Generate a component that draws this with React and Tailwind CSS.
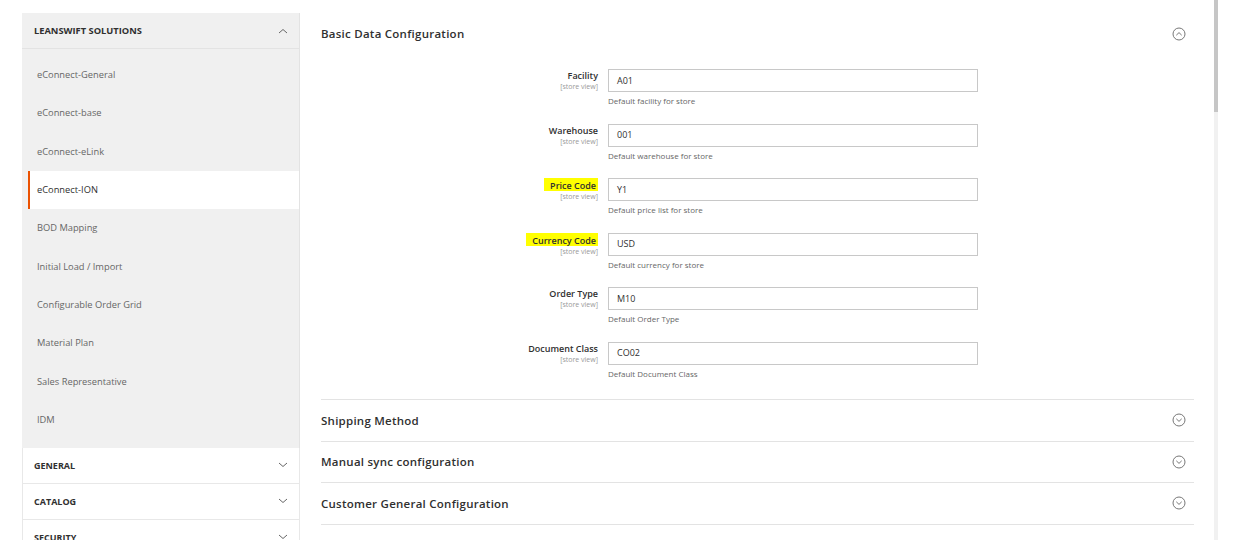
import React from "react";

function Chevron({ up }) {
  return (
    <svg width="10" height="6" viewBox="0 0 10 6" className="shrink-0">
      <path
        d={up ? "M1 5 L5 1.5 L9 5" : "M1 1 L5 4.5 L9 1"}
        fill="none"
        stroke="#666"
        strokeWidth="1"
      />
    </svg>
  );
}

function CircleChevron({ up }) {
  return (
    <svg width="14" height="14" viewBox="0 0 14 14" className="shrink-0">
      <circle cx="7" cy="7" r="6" fill="none" stroke="#777" strokeWidth="1" />
      <path
        d={up ? "M4.3 8.2 L7 5.6 L9.7 8.2" : "M4.3 5.8 L7 8.4 L9.7 5.8"}
        fill="none"
        stroke="#777"
        strokeWidth="1"
      />
    </svg>
  );
}

const items = [
  "eConnect-General",
  "eConnect-base",
  "eConnect-eLink",
  "eConnect-ION",
  "BOD Mapping",
  "Initial Load / Import",
  "Configurable Order Grid",
  "Material Plan",
  "Sales Representative",
  "IDM",
];

const fields = [
  { label: "Facility", value: "A01", help: "Default facility for store" },
  { label: "Warehouse", value: "001", help: "Default warehouse for store" },
  { label: "Price Code", value: "Y1", help: "Default price list for store", hl: true },
  { label: "Currency Code", value: "USD", help: "Default currency for store", hl: true },
  { label: "Order Type", value: "M10", help: "Default Order Type" },
  { label: "Document Class", value: "CO02", help: "Default Document Class" },
];

export default function App() {
  return (
    <div className="w-[1239px] h-[552px] bg-white font-['Open_Sans',sans-serif] overflow-hidden">
      <div className="h-[540px] overflow-hidden flex items-start">
        {/* Sidebar */}
        <div className="ml-[22px] mt-[13px] w-[278px] shrink-0 flex flex-col">
          <div className="h-[36px] shrink-0 bg-[#f0f0f0] border-r border-[#e3e3e3] border-b flex items-center justify-between pl-[12px] pr-[11px]">
            <span className="text-[9.3px] font-bold text-[#303030] uppercase">LeanSwift Solutions</span>
            <Chevron up />
          </div>
          <div className="shrink-0 bg-[#f0f0f0] border-r border-[#e3e3e3] pt-[7px] pb-[9px]">
            {items.map((it) =>
              it === "eConnect-ION" ? (
                <div key={it} className="h-[38.3px] bg-white ml-[6px] border-l-2 border-[#eb5202] flex items-center pl-[7px]">
                  <span className="text-[9.3px] text-[#303030]">{it}</span>
                </div>
              ) : (
                <div key={it} className="h-[38.3px] flex items-center pl-[15px]">
                  <span className="text-[9.3px] text-[#666]">{it}</span>
                </div>
              )
            )}
          </div>
          {["General", "Catalog", "Security"].map((s) => (
            <div key={s} className="h-[36px] shrink-0 bg-white border-x border-b border-[#e8e8e8] flex items-center justify-between pl-[11px] pr-[11px]">
              <span className="text-[9px] font-bold text-[#303030] uppercase">{s}</span>
              <Chevron />
            </div>
          ))}
        </div>

        {/* Main */}
        <div className="ml-[21px] w-[873px] shrink-0 pt-[27px]">
          <div className="flex items-center justify-between pr-[8px]">
            <span className="text-[11.5px] font-semibold text-[#303030] leading-[14px] tracking-[0.25px]">Basic Data Configuration</span>
            <CircleChevron up />
          </div>
          <div className="mt-[28px]">
            {fields.map((f) => (
              <div key={f.label} className="h-[54.5px] flex">
                <div className="w-[277px] shrink-0 flex flex-col items-end pt-[1px]">
                  <span className={"text-[9px] font-semibold text-[#303030] leading-[11px] " + (f.hl ? "bg-[#ffff00] pl-[6px] pr-[2px] pt-[2px] -mt-[1px]" : "")}>
                    {f.label}
                  </span>
                  <span className="text-[7px] text-[#999] leading-[9px] mt-[1px]">[store view]</span>
                </div>
                <div className="ml-[10px] w-[370px]">
                  <div className="h-[23px] border border-[#c8c8c8] flex items-center pl-[8px]">
                    <span className="text-[9px] text-[#303030]">{f.value}</span>
                  </div>
                  <div className="mt-[4px] text-[8px] text-[#666] leading-[10px]">{f.help}</div>
                </div>
              </div>
            ))}
          </div>
          <div className="mt-[3px] border-t border-[#e3e3e3]">
            {["Shipping Method", "Manual sync configuration", "Customer General Configuration"].map((t) => (
              <div key={t} className="h-[41.5px] border-b border-[#e3e3e3] flex items-center justify-between pr-[8px]">
                <span className="text-[11.5px] font-semibold text-[#303030] tracking-[0.25px]">{t}</span>
                <CircleChevron />
              </div>
            ))}
          </div>
        </div>

        {/* Scrollbar */}
        <div className="ml-[20px] w-[4px] h-[540px] shrink-0 flex flex-col">
          <div className="h-[112px] bg-[#c6c6c6]" />
          <div className="flex-1 bg-[#f1f1f1]" />
        </div>
      </div>
    </div>
  );
}
